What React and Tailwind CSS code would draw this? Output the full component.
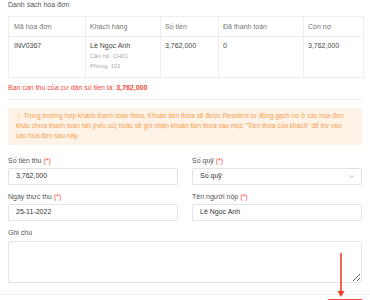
import React from 'react';

const invoices = [
  { code: 'INV0367', name: 'Lê Ngọc Anh', apt: 'Căn hộ: CH01', room: 'Phòng: 101', amount: '3,762,000', paid: '0', debt: '3,762,000' },
];

const Label = ({ children, required }) => (
  <div className="text-[7px] leading-[10px] text-[#555]">
    {children} {required && <span className="text-[#f0483e]">(*)</span>}
  </div>
);

const Field = ({ label, value, select }) => (
  <div className="flex flex-col">
    <Label required>{label}</Label>
    <div className="mt-[2px] h-[17px] border border-[#e3e3e3] rounded-[2px] bg-white flex items-center justify-between px-[7px] text-[7px] text-[#333]">
      <span>{value}</span>
      {select && (
        <svg width="5" height="3" viewBox="0 0 10 6" fill="none" stroke="#999" strokeWidth="1.5">
          <path d="M1 1l4 4 4-4" />
        </svg>
      )}
    </div>
  </div>
);

export default function App() {
  return (
    <div className="relative w-[370px] h-[300px] overflow-hidden bg-white" style={{ fontFamily: '"Liberation Sans", Arial, sans-serif' }}>
      <div className="px-2">
        <div className="text-[7px] leading-[10px] text-[#555]">Danh sách hóa đơn</div>

        <table className="mt-[6px] w-[355px] border-collapse table-fixed text-[7px] leading-[10px]">
          <colgroup>
            <col className="w-[77px]" />
            <col className="w-[75px]" />
            <col className="w-[58px]" />
            <col className="w-[85px]" />
            <col className="w-[60px]" />
          </colgroup>
          <thead>
            <tr className="h-[20px] text-[#777] text-left">
              <th className="font-normal border border-[#eeeeee] pl-[5px]">Mã hóa đơn</th>
              <th className="font-normal border border-[#eeeeee] pl-[4px]">Khách hàng</th>
              <th className="font-normal border border-[#eeeeee] pl-[4px]">Số tiền</th>
              <th className="font-normal border border-[#eeeeee] pl-[4px]">Đã thanh toán</th>
              <th className="font-normal border border-[#eeeeee] pl-[4px]">Còn nợ</th>
            </tr>
          </thead>
          <tbody>
            {invoices.map((inv) => (
              <tr key={inv.code} className="text-[#444] align-top">
                <td className="border border-[#eeeeee] pl-[5px] pt-[4px] pb-[6px]">{inv.code}</td>
                <td className="border border-[#eeeeee] pl-[4px] pt-[4px] pb-[6px]">
                  <div>{inv.name}</div>
                  <div className="text-[6px] text-[#aaa]">{inv.apt}</div>
                  <div className="text-[6px] text-[#aaa]">{inv.room}</div>
                </td>
                <td className="border border-[#eeeeee] pl-[4px] pt-[4px]">{inv.amount}</td>
                <td className="border border-[#eeeeee] pl-[4px] pt-[4px]">{inv.paid}</td>
                <td className="border border-[#eeeeee] pl-[4px] pt-[4px]">{inv.debt}</td>
              </tr>
            ))}
          </tbody>
        </table>

        <div className="mt-[5px] text-[7px] leading-[10px] text-[#f0483e]">
          Bạn cần thu của cư dân số tiền là: <span className="font-bold">3,762,000</span>
        </div>

        <div className="mt-[6px] border-t border-[#f0f0f0]" />

        <div className="mt-[8px] rounded-[2px] bg-[#fff3e8] pl-[8px] pr-[13px] pt-[3px] pb-[4px] text-[6.6px] leading-[10px] text-[#f5a04e]">
          ☆ Trong trường hợp khách thanh toán thừa, Khoản tiền thừa sẽ được Resident tự động gạch nợ ở các hóa đơn khác chưa thanh toán hết (nếu có) hoặc sẽ ghi nhận khoản tiền thừa vào mục "Tiền thừa của khách" để trừ vào các hóa đơn sau này.
        </div>

        <div className="mt-[11px] grid grid-cols-2 gap-x-[14px] gap-y-[7px]">
          <Field label="Số tiền thu" value="3,762,000" />
          <Field label="Số quỹ" value="Số quỹ" select />
          <Field label="Ngày thực thu" value="25-11-2022" />
          <Field label="Tên người nộp" value="Lê Ngọc Anh" />
        </div>

        <div className="mt-[7px]">
          <Label>Ghi chú</Label>
          <textarea readOnly className="mt-[3px] block w-full h-[42px] border border-[#e3e3e3] rounded-[2px] bg-white" />
        </div>
      </div>

      <div className="mt-[11px] border-t border-[#eeeeee]" />
      <div className="flex justify-end pr-[7px] mt-[4px]">
        <div className="w-[36px] h-[14px] border border-[#f0483e] bg-[#fff1f0] rounded-[2px]" />
      </div>

      <svg className="absolute left-[336px] top-[252px]" width="10" height="46" viewBox="0 0 10 46">
        <line x1="5" y1="1" x2="5" y2="40" stroke="#ee3b2b" strokeWidth="1.6" />
        <path d="M1.5 39 L8.5 39 L5 45 Z" fill="#ee3b2b" />
      </svg>
    </div>
  );
}
